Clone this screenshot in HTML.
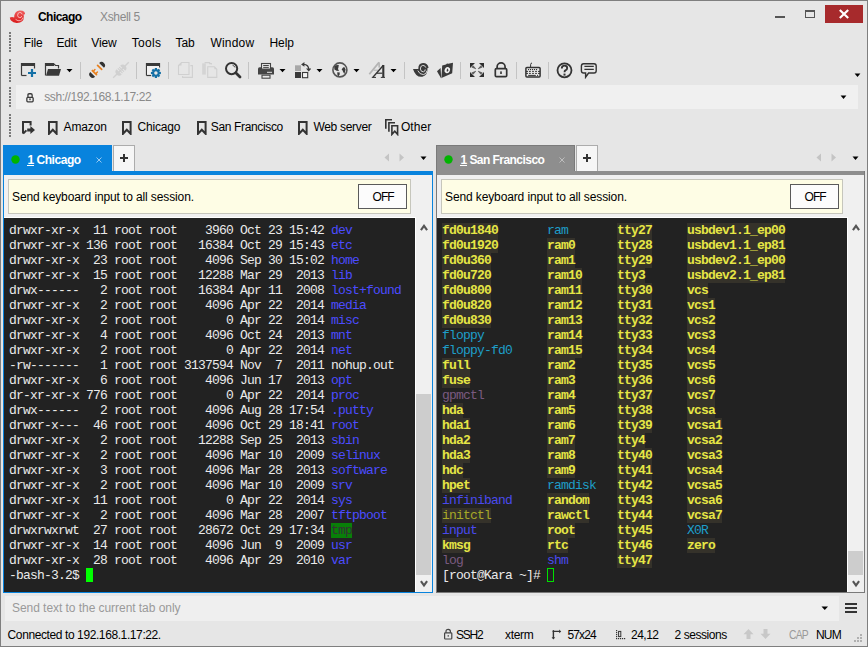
<!DOCTYPE html><html><head><meta charset="utf-8"><style>
*{margin:0;padding:0}
html,body{width:868px;height:647px;overflow:hidden;background:#e6e6e6}
body>div,body>svg{position:absolute}
.t{white-space:pre}
.term{position:absolute;font-family:'Liberation Mono',monospace;font-size:13px;line-height:15px;letter-spacing:-0.8px;color:#eaeaea;white-space:pre}
.term div{height:15px}
.dir{color:#4c4cff}
.tmp{background:#088008;color:#333}
.cur{display:inline-block;width:7px;height:14px;vertical-align:top;background:#00ff00}
.cur2{display:inline-block;width:7px;height:14px;vertical-align:top;box-shadow:inset 0 0 0 1px #00e000}
.y{color:#e6e645;font-weight:700;background:#35322a}
.c{color:#1e9ec8}
.b{color:#4a4aee}
.p{color:#7a5a80}
.o{color:#a8a828;background:#35322a}
</style></head><body><div style="left:0px;top:0px;width:868px;height:647px;background:#e6e6e6;"></div>
<div style="left:0px;top:0px;width:868px;height:647px;border:1px solid #7f7f7f;box-sizing:border-box"></div>
<svg style="position:absolute;left:8px;top:8px" width="19" height="17" viewBox="0 0 19 17"><defs><linearGradient id="rg" x1="0" y1="0" x2="0" y2="1"><stop offset="0" stop-color="#f06060"/><stop offset="1" stop-color="#d81818"/></linearGradient></defs><path d="M1.8 9.6 Q3.6 8.6 6.2 9.4 Q6 3.4 11.4 2.4 Q14.8 2.2 16.2 3.8 Q17.2 5 17 6.2 L15.6 6.6 Q17 12.8 12 14.6 Q6 16 3 12.6 Q2 11.4 1.8 9.6 Z" fill="url(#rg)"/><path d="M7.6 11.4 Q9.8 13.4 12.6 12.6 Q14.6 11.8 15 9.6" fill="none" stroke="#ffc8c8" stroke-width="0.8"/><path d="M14.2 6.4 Q13.8 4.4 11.8 4.4 Q9.6 4.6 9.6 7.4 Q10 9.8 12 9.8 Q13.6 9.6 13.6 8" fill="none" stroke="#ffd0d0" stroke-width="0.8"/></svg>
<div class="t" style="left:38px;top:10.54px;font-size:12px;line-height:12px;color:#000;font-weight:700;letter-spacing:-0.55px;font-family:'Liberation Sans',sans-serif;">Chicago</div>
<div class="t" style="left:100px;top:10.54px;font-size:12px;line-height:12px;color:#8a8a8a;font-weight:400;letter-spacing:-0.35px;font-family:'Liberation Sans',sans-serif;">Xshell 5</div>
<div style="left:775px;top:16px;width:10px;height:2px;background:#555;"></div>
<div style="left:805px;top:10px;width:10px;height:8px;border:1px solid #555;border-top-width:2px;box-sizing:border-box"></div>
<div style="left:825px;top:5px;width:38px;height:18px;background:#a72a2c;"></div>
<svg style="position:absolute;left:838px;top:9px" width="12" height="10" viewBox="0 0 12 10"><path d="M1.8 1 L10.2 9 M10.2 1 L1.8 9" stroke="#fff" stroke-width="2.2"/></svg>
<div style="left:9px;top:32px;width:2px;height:2px;background:#7a7a7a;"></div>
<div style="left:9px;top:35px;width:2px;height:2px;background:#7a7a7a;"></div>
<div style="left:9px;top:38px;width:2px;height:2px;background:#7a7a7a;"></div>
<div style="left:9px;top:41px;width:2px;height:2px;background:#7a7a7a;"></div>
<div style="left:9px;top:44px;width:2px;height:2px;background:#7a7a7a;"></div>
<div style="left:9px;top:47px;width:2px;height:2px;background:#7a7a7a;"></div>
<div style="left:9px;top:50px;width:2px;height:2px;background:#7a7a7a;"></div>
<div style="left:9px;top:59px;width:2px;height:2px;background:#7a7a7a;"></div>
<div style="left:9px;top:62px;width:2px;height:2px;background:#7a7a7a;"></div>
<div style="left:9px;top:65px;width:2px;height:2px;background:#7a7a7a;"></div>
<div style="left:9px;top:68px;width:2px;height:2px;background:#7a7a7a;"></div>
<div style="left:9px;top:71px;width:2px;height:2px;background:#7a7a7a;"></div>
<div style="left:9px;top:74px;width:2px;height:2px;background:#7a7a7a;"></div>
<div style="left:9px;top:77px;width:2px;height:2px;background:#7a7a7a;"></div>
<div style="left:9px;top:80px;width:2px;height:2px;background:#7a7a7a;"></div>
<div style="left:9px;top:87px;width:2px;height:2px;background:#7a7a7a;"></div>
<div style="left:9px;top:90px;width:2px;height:2px;background:#7a7a7a;"></div>
<div style="left:9px;top:93px;width:2px;height:2px;background:#7a7a7a;"></div>
<div style="left:9px;top:96px;width:2px;height:2px;background:#7a7a7a;"></div>
<div style="left:9px;top:99px;width:2px;height:2px;background:#7a7a7a;"></div>
<div style="left:9px;top:102px;width:2px;height:2px;background:#7a7a7a;"></div>
<div style="left:9px;top:105px;width:2px;height:2px;background:#7a7a7a;"></div>
<div style="left:9px;top:114px;width:2px;height:2px;background:#7a7a7a;"></div>
<div style="left:9px;top:117px;width:2px;height:2px;background:#7a7a7a;"></div>
<div style="left:9px;top:120px;width:2px;height:2px;background:#7a7a7a;"></div>
<div style="left:9px;top:123px;width:2px;height:2px;background:#7a7a7a;"></div>
<div style="left:9px;top:126px;width:2px;height:2px;background:#7a7a7a;"></div>
<div style="left:9px;top:129px;width:2px;height:2px;background:#7a7a7a;"></div>
<div style="left:9px;top:132px;width:2px;height:2px;background:#7a7a7a;"></div>
<div style="left:9px;top:135px;width:2px;height:2px;background:#7a7a7a;"></div>
<div class="t" style="left:23.7px;top:37.04px;font-size:12px;line-height:12px;color:#000;font-weight:400;letter-spacing:-0.1px;font-family:'Liberation Sans',sans-serif;">File</div>
<div class="t" style="left:56.4px;top:37.04px;font-size:12px;line-height:12px;color:#000;font-weight:400;letter-spacing:-0.1px;font-family:'Liberation Sans',sans-serif;">Edit</div>
<div class="t" style="left:91.3px;top:37.04px;font-size:12px;line-height:12px;color:#000;font-weight:400;letter-spacing:-0.1px;font-family:'Liberation Sans',sans-serif;">View</div>
<div class="t" style="left:131.7px;top:37.04px;font-size:12px;line-height:12px;color:#000;font-weight:400;letter-spacing:0.3px;font-family:'Liberation Sans',sans-serif;">Tools</div>
<div class="t" style="left:175.6px;top:37.04px;font-size:12px;line-height:12px;color:#000;font-weight:400;letter-spacing:-0.1px;font-family:'Liberation Sans',sans-serif;">Tab</div>
<div class="t" style="left:210.4px;top:37.04px;font-size:12px;line-height:12px;color:#000;font-weight:400;letter-spacing:0.2px;font-family:'Liberation Sans',sans-serif;">Window</div>
<div class="t" style="left:269.5px;top:37.04px;font-size:12px;line-height:12px;color:#000;font-weight:400;letter-spacing:-0.1px;font-family:'Liberation Sans',sans-serif;">Help</div>
<div style="left:80px;top:62px;width:1px;height:17px;background:#c4c4c4;"></div>
<div style="left:136px;top:62px;width:1px;height:17px;background:#c4c4c4;"></div>
<div style="left:168px;top:62px;width:1px;height:17px;background:#c4c4c4;"></div>
<div style="left:248px;top:62px;width:1px;height:17px;background:#c4c4c4;"></div>
<div style="left:404px;top:62px;width:1px;height:17px;background:#c4c4c4;"></div>
<div style="left:460px;top:62px;width:1px;height:17px;background:#c4c4c4;"></div>
<div style="left:516px;top:62px;width:1px;height:17px;background:#c4c4c4;"></div>
<div style="left:548px;top:62px;width:1px;height:17px;background:#c4c4c4;"></div>
<svg style="position:absolute;left:20px;top:62px" width="18" height="16" viewBox="0 0 18 16"><path d="M1.5 13.5 V1.5 H14.5 V6.5" fill="none" stroke="#3a3a3a" stroke-width="1.2"/><rect x="1" y="1" width="14" height="3" fill="#3a3a3a"/><path d="M1.5 13.5 H6.5" stroke="#3a3a3a" stroke-width="1.2"/><path d="M12 7 V15 M8 11 H16" stroke="#1570a6" stroke-width="2.2"/></svg>
<svg style="position:absolute;left:44px;top:62px" width="18" height="15" viewBox="0 0 18 15"><path d="M1.5 13.5 V1.5 H9.5 L11.5 3.5 H14.5 V6.5" fill="none" stroke="#3a3a3a" stroke-width="1.2"/><rect x="1" y="1" width="9" height="3" fill="#3a3a3a"/><path d="M2 13.8 L4 7 H17 L15 13.8 Z" fill="#3a3a3a"/></svg>
<svg style="position:absolute;left:66px;top:68px" width="7" height="5" viewBox="0 0 7 5"><path d="M0.5 1 H6.5 L3.5 4.2 Z" fill="#000"/></svg>
<svg style="position:absolute;left:88px;top:61px" width="18" height="18" viewBox="0 0 18 18"><g transform="translate(9.1 8.9) rotate(-45)"><path d="M6.3 -3.4 A3.4 3.4 0 0 1 6.3 3.4 Z" fill="#333"/><path d="M-6.3 -3.4 A3.4 3.4 0 0 0 -6.3 3.4 Z" fill="#333"/><rect x="2.7" y="-3.7" width="1.7" height="7.4" rx="0.8" fill="#e8801e"/><rect x="-4.7" y="-3.7" width="1.8" height="7.4" rx="0.8" fill="#e8801e"/><rect x="-3.6" y="-2.5" width="3" height="1.5" rx="0.7" fill="#e8801e"/><rect x="-3.6" y="1" width="3" height="1.5" rx="0.7" fill="#e8801e"/></g></svg>
<svg style="position:absolute;left:112px;top:61px" width="18" height="18" viewBox="0 0 18 18"><g transform="translate(9 9) rotate(-45)" fill="#d0d0d0"><rect x="-11" y="-0.7" width="22" height="1.4"/><path d="M-2.6 -3.6 A3.6 3.6 0 0 0 -2.6 3.6 Z"/><rect x="-1.7" y="-3.3" width="1.1" height="6.6"/><rect x="0.3" y="-3.3" width="1.1" height="6.6"/><path d="M2.4 -3.6 A3.6 3.6 0 0 1 2.4 3.6 Z"/></g></svg>
<svg style="position:absolute;left:144px;top:60px" width="20" height="20" viewBox="0 0 20 20"><path d="M2.5 15.5 V3.5 H15.5 V7.5" fill="none" stroke="#3a3a3a" stroke-width="1.2"/><rect x="3" y="4" width="12" height="11" fill="#f2f2f2"/><rect x="2" y="3" width="14" height="3" fill="#3a3a3a"/><path d="M2.5 15.5 H7" stroke="#3a3a3a" stroke-width="1.2"/><g transform="translate(11.9,13)"><circle r="4.6" fill="#e6e6e6"/><rect x="-1.1" y="-5" width="2.2" height="2.6" transform="rotate(0)" fill="#1570a6"/><rect x="-1.1" y="-5" width="2.2" height="2.6" transform="rotate(45)" fill="#1570a6"/><rect x="-1.1" y="-5" width="2.2" height="2.6" transform="rotate(90)" fill="#1570a6"/><rect x="-1.1" y="-5" width="2.2" height="2.6" transform="rotate(135)" fill="#1570a6"/><rect x="-1.1" y="-5" width="2.2" height="2.6" transform="rotate(180)" fill="#1570a6"/><rect x="-1.1" y="-5" width="2.2" height="2.6" transform="rotate(225)" fill="#1570a6"/><rect x="-1.1" y="-5" width="2.2" height="2.6" transform="rotate(270)" fill="#1570a6"/><rect x="-1.1" y="-5" width="2.2" height="2.6" transform="rotate(315)" fill="#1570a6"/><circle r="2.75" fill="none" stroke="#1570a6" stroke-width="2"/></g></svg>
<svg style="position:absolute;left:177px;top:61px" width="17" height="18" viewBox="0 0 17 18"><path d="M1.5 13.5 V4.5 L4.5 1.5 H12 V13.5 Z" fill="none" stroke="#d0d0d0" stroke-width="1.1"/><path d="M1.5 4.5 L4.5 1.5 V4.5 Z" fill="#d0d0d0"/><path d="M13.4 4.6 H15.4 V16.4 H5.6 V15" fill="none" stroke="#d0d0d0" stroke-width="1.1"/></svg>
<svg style="position:absolute;left:201px;top:61px" width="17" height="18" viewBox="0 0 17 18"><rect x="1.2" y="2.3" width="3.6" height="11.3" fill="#d4d4d4"/><path d="M3.6 1.6 H8.6 V2.6 H10.4 V3.6" fill="none" stroke="#d0d0d0" stroke-width="1.1"/><path d="M6.7 16.4 V5.8 H13.4 L15.8 8.2 V16.4 Z" fill="#e6e6e6" stroke="#d0d0d0" stroke-width="1.1"/><path d="M13.4 5.8 L15.8 8.2 H13.4 Z" fill="#d0d0d0"/></svg>
<svg style="position:absolute;left:224px;top:61px" width="18" height="18" viewBox="0 0 18 18"><circle cx="7.6" cy="7.6" r="5.6" fill="none" stroke="#333" stroke-width="2"/><path d="M12 12 L16 16" stroke="#333" stroke-width="2.8" stroke-linecap="round"/><path d="M8.5 4.2 A3.5 3.5 0 0 1 11 6.5" fill="none" stroke="#333" stroke-width="0.8"/></svg>
<svg style="position:absolute;left:257px;top:62px" width="18" height="17" viewBox="0 0 18 17"><path d="M1 6.8 Q1 5.2 2.6 5.2 H15.4 Q17 5.2 17 6.8 V12.6 H1 Z" fill="#444"/><rect x="4.5" y="1.5" width="9" height="5.6" fill="#e6e6e6" stroke="#444" stroke-width="1.1"/><path d="M6.2 3.5 H11.8 M6.2 5.4 H11.8" stroke="#444" stroke-width="1"/><rect x="10" y="9.8" width="5" height="1" fill="#e6e6e6"/><rect x="5" y="13.2" width="8" height="3" fill="#e6e6e6" stroke="#444" stroke-width="1.1"/></svg>
<svg style="position:absolute;left:279px;top:68px" width="7" height="5" viewBox="0 0 7 5"><path d="M0.5 1 H6.5 L3.5 4.2 Z" fill="#000"/></svg>
<svg style="position:absolute;left:294px;top:62px" width="17" height="17" viewBox="0 0 17 17"><rect x="1" y="3.3" width="6" height="5.7" fill="#a8a8a8"/><rect x="1" y="10" width="6" height="6" fill="#3a3a3a"/><rect x="8.5" y="10.5" width="5.2" height="5.2" fill="#f4f4f4" stroke="#3a3a3a" stroke-width="1.1"/><path d="M9.6 2.4 Q14.6 2.6 14.7 7.2" fill="none" stroke="#3a3a3a" stroke-width="1.3"/><path d="M7.1 2.4 L10.4 0 V4.8 Z M14.7 9.6 L12 6.6 H17.4 Z" fill="#3a3a3a"/></svg>
<svg style="position:absolute;left:316px;top:68px" width="7" height="5" viewBox="0 0 7 5"><path d="M0.5 1 H6.5 L3.5 4.2 Z" fill="#000"/></svg>
<svg style="position:absolute;left:331px;top:61px" width="18" height="18" viewBox="0 0 18 18"><circle cx="8.9" cy="8.9" r="7" fill="none" stroke="#555" stroke-width="1.6"/><path d="M3.2 5.4 Q4.8 3.6 7.8 4 L7.4 6.4 L7 8 L8 10 L5.6 9.8 L3.4 8.6 Z" fill="#3a3a3a"/><path d="M6.2 11.2 L8.8 11.4 L8.6 13.4 L7.2 15.4 L6.4 13.2 Z" fill="#3a3a3a"/><path d="M10.6 8.6 L12.2 6.2 L13.8 6.4 L14.6 8.6 L14 10.8 L13.4 12.9 L12.2 11 L11.4 9.2 Z" fill="#3a3a3a"/></svg>
<svg style="position:absolute;left:353px;top:68px" width="7" height="5" viewBox="0 0 7 5"><path d="M0.5 1 H6.5 L3.5 4.2 Z" fill="#000"/></svg>
<svg style="position:absolute;left:366px;top:58px" width="24" height="24" viewBox="0 0 24 24"><g stroke="#b4b4b4" fill="none"><path d="M3.3 16.3 L13 4.4" stroke-width="1.8"/><path d="M13 4.4 L13.3 9.6" stroke-width="1.6"/><path d="M7.8 12.2 H12.4" stroke-width="1.1"/></g><g stroke="#333" fill="none"><path d="M6.9 19.2 L17.4 7.2" stroke-width="1.3"/><path d="M17.3 7 V19.2" stroke-width="2.1"/><path d="M11 15.2 H16.4" stroke-width="1.2"/><path d="M5.8 19.4 H10 M14.8 19.4 H19" stroke-width="1"/></g></svg>
<svg style="position:absolute;left:390px;top:68px" width="7" height="5" viewBox="0 0 7 5"><path d="M0.5 1 H6.5 L3.5 4.2 Z" fill="#000"/></svg>
<svg style="position:absolute;left:412px;top:62px" width="18" height="16" viewBox="0 0 18 16"><path d="M1 7 H6.3 Q6.2 1.2 11 1.1 Q15.8 1.2 16.6 5.8 L15.4 6.2 Q16.2 12.6 10.4 14.8 Q3.6 15.6 1 7 Z" fill="#3a3a3a"/><path d="M5.8 8.6 Q7.6 12.6 11.4 12.6 Q14.6 12.2 15 8.6" fill="none" stroke="#e6e6e6" stroke-width="0.9"/><path d="M13.8 5.6 Q13 3.2 10.8 3.4 Q8.2 3.8 8.4 7 Q8.8 10 11.4 9.8 Q13.4 9.4 13.2 7.4" fill="none" stroke="#e6e6e6" stroke-width="0.9"/><circle cx="11" cy="6.8" r="1.3" fill="#3a3a3a"/></svg>
<svg style="position:absolute;left:434px;top:60px" width="22" height="20" viewBox="0 0 22 20"><path d="M3 11.2 L6.6 8 L7.2 18.4 Z" fill="#3a3a3a"/><path d="M8.2 5.6 L12 4.4 L13 3.6 L14.2 3.8 L19 2.8 L18.2 13.2 L7.4 18 Z" fill="#3a3a3a"/><ellipse cx="13.3" cy="10.1" rx="2.6" ry="3.1" transform="rotate(25 13.3 10.1)" fill="#f2f2f2"/><path d="M13.9 8.2 L14.3 10.2 L13 12.2 L12.6 10 Z" fill="#3a3a3a"/></svg>
<svg style="position:absolute;left:466px;top:60px" width="22" height="20" viewBox="0 0 22 20"><path d="M4 3 H9 L4 8 Z M18 3 H13 L18 8 Z M4 17 H9 L4 12 Z M18 17 H13 L18 12 Z" fill="#2e2e2e"/><path d="M5.8 7.2 L7.2 5.8 L9.8 8.8 Z M16.2 7.2 L14.8 5.8 L12.2 8.8 Z M5.8 12.8 L7.2 14.2 L9.8 11.2 Z M16.2 12.8 L14.8 14.2 L12.2 11.2 Z" fill="#555" stroke="#555" stroke-width="0.6" stroke-linejoin="round"/></svg>
<svg style="position:absolute;left:494px;top:61px" width="14" height="17" viewBox="0 0 14 17"><path d="M3.1 7.6 V5.9 A4 4 0 0 1 11.1 5.9 V7.6" fill="none" stroke="#333" stroke-width="1.7"/><rect x="1.3" y="7.6" width="11.4" height="8" rx="1.2" fill="none" stroke="#333" stroke-width="1.7"/><rect x="6.2" y="10.4" width="1.6" height="2.6" fill="#333"/></svg>
<svg style="position:absolute;left:524px;top:61px" width="18" height="18" viewBox="0 0 18 18"><path d="M6.6 6 V3.6 Q6.6 2.2 8 2" fill="none" stroke="#333" stroke-width="1"/><rect x="1.9" y="6.6" width="14.2" height="9.4" rx="1" fill="none" stroke="#333" stroke-width="1.5"/><g fill="#333"><rect x="4" y="8" width="1.1" height="1.1"/><rect x="6" y="8" width="1.1" height="1.1"/><rect x="8" y="8" width="1.1" height="1.1"/><rect x="10" y="8" width="1.1" height="1.1"/><rect x="12" y="8" width="1.1" height="1.1"/><rect x="5" y="9.9" width="1.8" height="1"/><rect x="8.1" y="9.9" width="1.8" height="1"/><rect x="11.1" y="9.9" width="1.8" height="1"/><rect x="5" y="11.9" width="1.8" height="1"/><rect x="8.1" y="11.9" width="1.8" height="1"/><rect x="11.1" y="11.9" width="1.8" height="1"/><rect x="4.2" y="13.9" width="7.6" height="1"/><rect x="13" y="13.9" width="1.1" height="1"/><rect x="2" y="9.9" width="2" height="1"/><rect x="2" y="11.9" width="2" height="1"/><rect x="14" y="9.9" width="2" height="1"/><rect x="14" y="11.9" width="2" height="1"/></g></svg>
<svg style="position:absolute;left:556px;top:62px" width="17" height="17" viewBox="0 0 17 17"><circle cx="8.5" cy="8.3" r="7" fill="none" stroke="#333" stroke-width="1.8"/><path d="M5.8 6.4 Q5.8 3.6 8.5 3.6 Q11.2 3.6 11.2 6 Q11.2 7.6 9.4 8.4 Q8.5 8.9 8.5 10.2" fill="none" stroke="#333" stroke-width="1.8"/><rect x="7.5" y="11.6" width="2" height="2" fill="#333"/></svg>
<svg style="position:absolute;left:580px;top:62px" width="18" height="17" viewBox="0 0 18 17"><path d="M3.6 1.8 H14 Q16.2 1.8 16.2 4 V8.8 Q16.2 11 14 11 H8.6 L5.6 15.2 L5.6 11 H3.6 Q1.4 11 1.4 8.8 V4 Q1.4 1.8 3.6 1.8 Z" fill="none" stroke="#333" stroke-width="1.4"/><path d="M4.4 4.3 H13.8 M4.4 7.3 H13.8" stroke="#333" stroke-width="1.3"/></svg>
<svg style="position:absolute;left:854px;top:73px" width="8" height="5" viewBox="0 0 8 5"><path d="M0.6 0.6 H6.4 L3.5 4 Z" fill="#000"/></svg>
<div style="left:16px;top:85px;width:842px;height:24px;background:#f0f0f0;"></div>
<svg style="position:absolute;left:25px;top:92px" width="10" height="11" viewBox="0 0 10 11"><rect x="1.85" y="5.35" width="6.3" height="4.5" rx="1" fill="none" stroke="#3a3a3a" stroke-width="1.3"/><path d="M2.95 5.35 V3 Q2.95 1.75 4.2 1.75 H5.9 Q7.15 1.75 7.15 3 V5.35" fill="none" stroke="#3a3a3a" stroke-width="1.3"/><rect x="4.3" y="6.4" width="1.4" height="1.8" fill="#3a3a3a"/></svg>
<div class="t" style="left:44.2px;top:91.24px;font-size:12px;line-height:12px;color:#8a8a8a;font-weight:400;letter-spacing:-0.4px;font-family:'Liberation Sans',sans-serif;">ssh://192.168.1.17:22</div>
<svg style="position:absolute;left:840px;top:95px" width="8" height="5" viewBox="0 0 8 5"><path d="M0.6 0.6 H6.4 L3.5 4 Z" fill="#000"/></svg>
<svg style="position:absolute;left:22px;top:121px" width="14" height="14" viewBox="0 0 14 14"><path d="M1 12.5 V1 H8.6 V4.4" fill="none" stroke="#333" stroke-width="2"/><path d="M1.2 12.6 L4.4 9.4" stroke="#333" stroke-width="2"/><path d="M5.2 7.4 H8.4 V5 L13 9 L8.4 13 V10.6 H5.2 Z" fill="#333"/></svg>
<svg style="position:absolute;left:47.5px;top:121px" width="10" height="14" viewBox="0 0 10 14"><path d="M1 1 H8.6 V12.8 L4.8 8.8 L1 12.8 Z" fill="none" stroke="#333" stroke-width="2" stroke-linejoin="miter"/></svg>
<div class="t" style="left:63.6px;top:120.54px;font-size:12px;line-height:12px;color:#000;font-weight:400;letter-spacing:-0.15px;font-family:'Liberation Sans',sans-serif;">Amazon</div>
<svg style="position:absolute;left:121.5px;top:121px" width="10" height="14" viewBox="0 0 10 14"><path d="M1 1 H8.6 V12.8 L4.8 8.8 L1 12.8 Z" fill="none" stroke="#333" stroke-width="2" stroke-linejoin="miter"/></svg>
<div class="t" style="left:137.4px;top:120.54px;font-size:12px;line-height:12px;color:#000;font-weight:400;letter-spacing:-0.15px;font-family:'Liberation Sans',sans-serif;">Chicago</div>
<svg style="position:absolute;left:196.5px;top:121px" width="10" height="14" viewBox="0 0 10 14"><path d="M1 1 H8.6 V12.8 L4.8 8.8 L1 12.8 Z" fill="none" stroke="#333" stroke-width="2" stroke-linejoin="miter"/></svg>
<div class="t" style="left:210.8px;top:120.54px;font-size:12px;line-height:12px;color:#000;font-weight:400;letter-spacing:-0.35px;font-family:'Liberation Sans',sans-serif;">San Francisco</div>
<svg style="position:absolute;left:297.5px;top:121px" width="10" height="14" viewBox="0 0 10 14"><path d="M1 1 H8.6 V12.8 L4.8 8.8 L1 12.8 Z" fill="none" stroke="#333" stroke-width="2" stroke-linejoin="miter"/></svg>
<div class="t" style="left:313.4px;top:120.54px;font-size:12px;line-height:12px;color:#000;font-weight:400;letter-spacing:-0.3px;font-family:'Liberation Sans',sans-serif;">Web server</div>
<svg style="position:absolute;left:384px;top:118px" width="16" height="18" viewBox="0 0 16 18"><path d="M1.8 10.8 V1.8 H8" fill="none" stroke="#333" stroke-width="1.6"/><path d="M4.9 13.8 V4.8 H11" fill="none" stroke="#333" stroke-width="1.6"/><path d="M7.9 16.4 V7.8 H13.6 V16.4 L10.75 13.2 Z" fill="none" stroke="#333" stroke-width="1.6"/></svg>
<div class="t" style="left:400.9px;top:120.54px;font-size:12px;line-height:12px;color:#000;font-weight:400;letter-spacing:0.1px;font-family:'Liberation Sans',sans-serif;">Other</div>
<div style="left:3px;top:145px;width:109px;height:26px;background:#0883dd;"></div>
<div style="left:113px;top:145px;width:22px;height:26px;background:#f6f6f6;border:1px solid #acacac;border-bottom:none;box-sizing:border-box"></div>
<svg style="position:absolute;left:119px;top:153px" width="10" height="10" viewBox="0 0 10 10"><path d="M5 1 V9 M1 5 H9" stroke="#333" stroke-width="2"/></svg>
<div style="left:3px;top:171px;width:430px;height:4px;background:#0883dd;"></div>
<div style="left:3px;top:171px;width:430px;height:422px;border:1px solid #0883dd;border-top:none;box-sizing:border-box"></div>
<div style="left:4px;top:175px;width:428px;height:417px;background:#f0f0f0;"></div>
<svg style="position:absolute;left:11px;top:155px" width="9" height="9" viewBox="0 0 9 9"><circle cx="4.5" cy="4.5" r="4.2" fill="#00b400"/></svg>
<div class="t" style="left:27.4px;top:153.64px;font-size:12px;line-height:12px;color:#fff;font-weight:700;letter-spacing:-0.45px;font-family:'Liberation Sans',sans-serif;">1 Chicago</div>
<div style="left:26.9px;top:165px;width:7px;height:1px;background:#fff;"></div>
<svg style="position:absolute;left:96px;top:157px" width="6" height="6" viewBox="0 0 6 6"><path d="M0.5 0.5 L5.5 5.5 M5.5 0.5 L0.5 5.5" stroke="#a8d0f2" stroke-width="0.9"/></svg>
<div style="left:436px;top:145px;width:139px;height:26px;background:#8e8e8e;border:1px solid #7a7a7a;border-bottom:none;box-sizing:border-box"></div>
<div style="left:576px;top:145px;width:22px;height:26px;background:#f6f6f6;border:1px solid #acacac;border-bottom:none;box-sizing:border-box"></div>
<svg style="position:absolute;left:582px;top:153px" width="10" height="10" viewBox="0 0 10 10"><path d="M5 1 V9 M1 5 H9" stroke="#333" stroke-width="2"/></svg>
<div style="left:436px;top:171px;width:429px;height:4px;background:#8e8e8e;"></div>
<div style="left:436px;top:171px;width:429px;height:422px;border:1px solid #7a7a7a;border-top:none;box-sizing:border-box"></div>
<div style="left:437px;top:175px;width:427px;height:417px;background:#f0f0f0;"></div>
<svg style="position:absolute;left:444px;top:155px" width="9" height="9" viewBox="0 0 9 9"><circle cx="4.5" cy="4.5" r="4.2" fill="#00b400"/></svg>
<div class="t" style="left:460.5px;top:153.64px;font-size:12px;line-height:12px;color:#fff;font-weight:700;letter-spacing:-0.55px;font-family:'Liberation Sans',sans-serif;">1 San Francisco</div>
<div style="left:460.0px;top:165px;width:7px;height:1px;background:#fff;"></div>
<svg style="position:absolute;left:558.5px;top:157px" width="6" height="6" viewBox="0 0 6 6"><path d="M0.5 0.5 L5.5 5.5 M5.5 0.5 L0.5 5.5" stroke="#c4c4c4" stroke-width="0.9"/></svg>
<svg style="position:absolute;left:384px;top:153px" width="6" height="9" viewBox="0 0 6 9"><path d="M5 0.5 V8.5 L0.5 4.5 Z" fill="#c4c4c4"/></svg>
<svg style="position:absolute;left:399px;top:153px" width="6" height="9" viewBox="0 0 6 9"><path d="M0.5 0.5 V8.5 L5 4.5 Z" fill="#c4c4c4"/></svg>
<svg style="position:absolute;left:816px;top:153px" width="6" height="9" viewBox="0 0 6 9"><path d="M5 0.5 V8.5 L0.5 4.5 Z" fill="#c4c4c4"/></svg>
<svg style="position:absolute;left:831px;top:153px" width="6" height="9" viewBox="0 0 6 9"><path d="M0.5 0.5 V8.5 L5 4.5 Z" fill="#c4c4c4"/></svg>
<svg style="position:absolute;left:420px;top:156px" width="7" height="5" viewBox="0 0 7 5"><path d="M0.5 0.5 H6.5 L3.5 4 Z" fill="#000"/></svg>
<svg style="position:absolute;left:852px;top:156px" width="7" height="5" viewBox="0 0 7 5"><path d="M0.5 0.5 H6.5 L3.5 4 Z" fill="#000"/></svg>
<div style="left:8px;top:179px;width:403px;height:35px;background:#fefde5;border:1px solid #c6c6bc;box-sizing:border-box"></div>
<div class="t" style="left:12px;top:190.84px;font-size:12px;line-height:12px;color:#000;font-weight:400;letter-spacing:-0.12px;font-family:'Liberation Sans',sans-serif;">Send keyboard input to all session.</div>
<div style="left:358px;top:184px;width:49px;height:25px;background:#fcfcfc;border:1px solid #5a5a5a;box-sizing:border-box"></div>
<div class="t" style="left:372.5px;top:190.84px;font-size:12px;line-height:12px;color:#000;font-weight:400;letter-spacing:-0.9px;font-family:'Liberation Sans',sans-serif;">OFF</div>
<div style="left:441px;top:179px;width:402px;height:35px;background:#fefde5;border:1px solid #c6c6bc;box-sizing:border-box"></div>
<div class="t" style="left:445px;top:190.84px;font-size:12px;line-height:12px;color:#000;font-weight:400;letter-spacing:-0.12px;font-family:'Liberation Sans',sans-serif;">Send keyboard input to all session.</div>
<div style="left:790px;top:184px;width:49px;height:25px;background:#fcfcfc;border:1px solid #5a5a5a;box-sizing:border-box"></div>
<div class="t" style="left:804.5px;top:190.84px;font-size:12px;line-height:12px;color:#000;font-weight:400;letter-spacing:-0.9px;font-family:'Liberation Sans',sans-serif;">OFF</div>
<div style="left:4px;top:217px;width:412px;height:375px;background:#ffffff;"></div>
<div style="left:4px;top:218px;width:411px;height:374px;background:#222222;"></div>
<div style="left:416px;top:217px;width:16px;height:375px;background:#f0f0f0;"></div>
<div class="term" style="left:9px;top:222.6px"><div>drwxr-xr-x  11 root root    3960 Oct 23 15:42 <span class="dir">dev</span></div><div>drwxr-xr-x 136 root root   16384 Oct 29 15:43 <span class="dir">etc</span></div><div>drwxr-xr-x  23 root root    4096 Sep 30 15:02 <span class="dir">home</span></div><div>drwxr-xr-x  15 root root   12288 Mar 29  2013 <span class="dir">lib</span></div><div>drwx------   2 root root   16384 Apr 11  2008 <span class="dir">lost+found</span></div><div>drwxr-xr-x   2 root root    4096 Apr 22  2014 <span class="dir">media</span></div><div>drwxr-xr-x   2 root root       0 Apr 22  2014 <span class="dir">misc</span></div><div>drwxr-xr-x   4 root root    4096 Oct 24  2013 <span class="dir">mnt</span></div><div>drwxr-xr-x   2 root root       0 Apr 22  2014 <span class="dir">net</span></div><div>-rw-------   1 root root 3137594 Nov  7  2011 nohup.out</div><div>drwxr-xr-x   6 root root    4096 Jun 17  2013 <span class="dir">opt</span></div><div>dr-xr-xr-x 776 root root       0 Apr 22  2014 <span class="dir">proc</span></div><div>drwx------   2 root root    4096 Aug 28 17:54 <span class="dir">.putty</span></div><div>drwxr-x---  46 root root    4096 Oct 29 18:41 <span class="dir">root</span></div><div>drwxr-xr-x   2 root root   12288 Sep 25  2013 <span class="dir">sbin</span></div><div>drwxr-xr-x   2 root root    4096 Mar 10  2009 <span class="dir">selinux</span></div><div>drwxr-xr-x   3 root root    4096 Mar 28  2013 <span class="dir">software</span></div><div>drwxr-xr-x   2 root root    4096 Mar 10  2009 <span class="dir">srv</span></div><div>drwxr-xr-x  11 root root       0 Apr 22  2014 <span class="dir">sys</span></div><div>drwxr-xr-x   2 root root    4096 Mar 28  2007 <span class="dir">tftpboot</span></div><div>drwxrwxrwt  27 root root   28672 Oct 29 17:34 <span class="tmp">tmp</span></div><div>drwxr-xr-x  14 root root    4096 Jun  9  2009 <span class="dir">usr</span></div><div>drwxr-xr-x  28 root root    4096 Apr 29  2010 <span class="dir">var</span></div><div>-bash-3.2$ <span class="cur"></span></div></div>
<div style="left:416px;top:394px;width:15px;height:181px;background:#cdcdcd;"></div>
<svg style="position:absolute;left:419.5px;top:223.5px" width="8" height="8" viewBox="0 0 8 8"><path d="M0.9 6.1 L4 1.8 L7.1 6.1" fill="none" stroke="#555" stroke-width="2.1"/></svg>
<svg style="position:absolute;left:419.5px;top:580px" width="8" height="8" viewBox="0 0 8 8"><path d="M0.9 1.2 L4 5.4 L7.1 1.2" fill="none" stroke="#555" stroke-width="2.1"/></svg>
<div style="left:437px;top:217px;width:411px;height:375px;background:#ffffff;"></div>
<div style="left:437px;top:218px;width:410px;height:374px;background:#222222;"></div>
<div style="left:848px;top:217px;width:16px;height:375px;background:#f0f0f0;"></div>
<div class="term" style="left:442px;top:222.6px"><div><span class="y">fd0u1840</span>       <span class="c">ram</span>       <span class="y">tty27</span>     <span class="y">usbdev1.1_ep00</span></div><div><span class="y">fd0u1920</span>       <span class="y">ram0</span>      <span class="y">tty28</span>     <span class="y">usbdev1.1_ep81</span></div><div><span class="y">fd0u360</span>        <span class="y">ram1</span>      <span class="y">tty29</span>     <span class="y">usbdev2.1_ep00</span></div><div><span class="y">fd0u720</span>        <span class="y">ram10</span>     <span class="y">tty3</span>      <span class="y">usbdev2.1_ep81</span></div><div><span class="y">fd0u800</span>        <span class="y">ram11</span>     <span class="y">tty30</span>     <span class="y">vcs</span></div><div><span class="y">fd0u820</span>        <span class="y">ram12</span>     <span class="y">tty31</span>     <span class="y">vcs1</span></div><div><span class="y">fd0u830</span>        <span class="y">ram13</span>     <span class="y">tty32</span>     <span class="y">vcs2</span></div><div><span class="c">floppy</span>         <span class="y">ram14</span>     <span class="y">tty33</span>     <span class="y">vcs3</span></div><div><span class="c">floppy-fd0</span>     <span class="y">ram15</span>     <span class="y">tty34</span>     <span class="y">vcs4</span></div><div><span class="y">full</span>           <span class="y">ram2</span>      <span class="y">tty35</span>     <span class="y">vcs5</span></div><div><span class="y">fuse</span>           <span class="y">ram3</span>      <span class="y">tty36</span>     <span class="y">vcs6</span></div><div><span class="p">gpmctl</span>         <span class="y">ram4</span>      <span class="y">tty37</span>     <span class="y">vcs7</span></div><div><span class="y">hda</span>            <span class="y">ram5</span>      <span class="y">tty38</span>     <span class="y">vcsa</span></div><div><span class="y">hda1</span>           <span class="y">ram6</span>      <span class="y">tty39</span>     <span class="y">vcsa1</span></div><div><span class="y">hda2</span>           <span class="y">ram7</span>      <span class="y">tty4</span>      <span class="y">vcsa2</span></div><div><span class="y">hda3</span>           <span class="y">ram8</span>      <span class="y">tty40</span>     <span class="y">vcsa3</span></div><div><span class="y">hdc</span>            <span class="y">ram9</span>      <span class="y">tty41</span>     <span class="y">vcsa4</span></div><div><span class="y">hpet</span>           <span class="c">ramdisk</span>   <span class="y">tty42</span>     <span class="y">vcsa5</span></div><div><span class="b">infiniband</span>     <span class="y">random</span>    <span class="y">tty43</span>     <span class="y">vcsa6</span></div><div><span class="o">initctl</span>        <span class="y">rawctl</span>    <span class="y">tty44</span>     <span class="y">vcsa7</span></div><div><span class="b">input</span>          <span class="y">root</span>      <span class="y">tty45</span>     <span class="c">X0R</span></div><div><span class="y">kmsg</span>           <span class="y">rtc</span>       <span class="y">tty46</span>     <span class="y">zero</span></div><div><span class="p">log</span>            <span class="b">shm</span>       <span class="y">tty47</span></div><div>[root@Kara ~]# <span class="cur2"></span></div></div>
<div style="left:848px;top:551px;width:15px;height:24px;background:#cdcdcd;"></div>
<svg style="position:absolute;left:851.5px;top:223.5px" width="8" height="8" viewBox="0 0 8 8"><path d="M0.9 6.1 L4 1.8 L7.1 6.1" fill="none" stroke="#555" stroke-width="2.1"/></svg>
<svg style="position:absolute;left:851.5px;top:580px" width="8" height="8" viewBox="0 0 8 8"><path d="M0.9 1.2 L4 5.4 L7.1 1.2" fill="none" stroke="#555" stroke-width="2.1"/></svg>
<div style="left:5px;top:596px;width:834px;height:25px;background:#efefef;"></div>
<div class="t" style="left:12px;top:601.84px;font-size:12px;line-height:12px;color:#9a9a9a;font-weight:400;letter-spacing:-0.05px;font-family:'Liberation Sans',sans-serif;">Send text to the current tab only</div>
<svg style="position:absolute;left:821px;top:606px" width="8" height="5" viewBox="0 0 8 5"><path d="M0.5 0.5 H7 L3.75 4 Z" fill="#000"/></svg>
<svg style="position:absolute;left:845px;top:603px" width="12" height="10" viewBox="0 0 12 10"><path d="M0 1 H12 M0 5 H12 M0 9 H12" stroke="#333" stroke-width="1.8"/></svg>
<div class="t" style="left:7.6px;top:628.64px;font-size:12px;line-height:12px;color:#000;font-weight:400;letter-spacing:-0.4px;font-family:'Liberation Sans',sans-serif;">Connected to 192.168.1.17:22.</div>
<svg style="position:absolute;left:443px;top:628px" width="10" height="12" viewBox="0 0 10 12"><rect x="1.6" y="4.8" width="7.2" height="6.2" rx="0.8" fill="none" stroke="#444" stroke-width="1.2"/><path d="M3 4.8 V3.4 Q3 1.3 5.2 1.3 Q7.4 1.3 7.4 3.4 V4.8" fill="none" stroke="#444" stroke-width="1.2"/><rect x="4.6" y="7.2" width="1.3" height="1.4" fill="#444"/></svg>
<div class="t" style="left:456px;top:628.64px;font-size:12px;line-height:12px;color:#000;font-weight:400;letter-spacing:-1.2px;font-family:'Liberation Sans',sans-serif;">SSH2</div>
<div class="t" style="left:505px;top:628.64px;font-size:12px;line-height:12px;color:#000;font-weight:400;letter-spacing:-0.3px;font-family:'Liberation Sans',sans-serif;">xterm</div>
<svg style="position:absolute;left:548px;top:626px" width="16" height="16" viewBox="0 0 16 16"><path d="M5.4 4.6 V12.6 M5.4 5.4 H12" stroke="#333" stroke-width="1.4" fill="none"/><path d="M3.6 11.2 H7.2 L5.4 13.4 Z M11.2 3.6 V7.2 L13.2 5.4 Z M4 5.4 L5.4 4 L6.8 5.4 Z" fill="#333"/></svg>
<div class="t" style="left:567.5px;top:628.64px;font-size:12px;line-height:12px;color:#000;font-weight:400;letter-spacing:-0.9px;font-family:'Liberation Sans',sans-serif;">57x24</div>
<svg style="position:absolute;left:612px;top:626px" width="16" height="16" viewBox="0 0 16 16"><g fill="#333"><rect x="4" y="4" width="1.2" height="1.2"/><rect x="4" y="6" width="1.2" height="1.2"/><rect x="4" y="8" width="1.2" height="1.2"/><rect x="4" y="10" width="1.2" height="1.2"/><rect x="4" y="12" width="1.2" height="1.2"/><rect x="6" y="12" width="1.2" height="1.2"/><rect x="8" y="12" width="1.2" height="1.2"/><rect x="10" y="12" width="1.2" height="1.2"/><rect x="12" y="12" width="1.2" height="1.2"/></g><rect x="6.6" y="5.4" width="2.2" height="5.2" fill="none" stroke="#333" stroke-width="1"/></svg>
<div class="t" style="left:631px;top:628.64px;font-size:12px;line-height:12px;color:#000;font-weight:400;letter-spacing:-0.5px;font-family:'Liberation Sans',sans-serif;">24,12</div>
<div class="t" style="left:674.6px;top:628.64px;font-size:12px;line-height:12px;color:#000;font-weight:400;letter-spacing:-0.45px;font-family:'Liberation Sans',sans-serif;">2 sessions</div>
<svg style="position:absolute;left:743px;top:628px" width="12" height="12" viewBox="0 0 12 12"><path d="M5.5 1 L10.5 6.2 H7.5 V11 H3.5 V6.2 H0.5 Z" fill="#c8c8c8"/></svg>
<svg style="position:absolute;left:760px;top:628px" width="12" height="12" viewBox="0 0 12 12"><path d="M5.5 11 L10.5 5.8 H7.5 V1 H3.5 V5.8 H0.5 Z" fill="#c8c8c8"/></svg>
<div class="t" style="left:789px;top:628.64px;font-size:12px;line-height:12px;color:#9a9a9a;font-weight:400;letter-spacing:-0.9px;font-family:'Liberation Sans',sans-serif;transform:scaleX(0.86);transform-origin:0 0">CAP</div>
<div class="t" style="left:816px;top:628.64px;font-size:12px;line-height:12px;color:#000;font-weight:400;letter-spacing:-0.8px;font-family:'Liberation Sans',sans-serif;">NUM</div>
<div style="left:860px;top:634px;width:2px;height:2px;background:#b0b0b0;"></div>
<div style="left:857px;top:637px;width:2px;height:2px;background:#b0b0b0;"></div>
<div style="left:860px;top:637px;width:2px;height:2px;background:#b0b0b0;"></div>
<div style="left:854px;top:640px;width:2px;height:2px;background:#b0b0b0;"></div>
<div style="left:857px;top:640px;width:2px;height:2px;background:#b0b0b0;"></div>
<div style="left:860px;top:640px;width:2px;height:2px;background:#b0b0b0;"></div></body></html>
